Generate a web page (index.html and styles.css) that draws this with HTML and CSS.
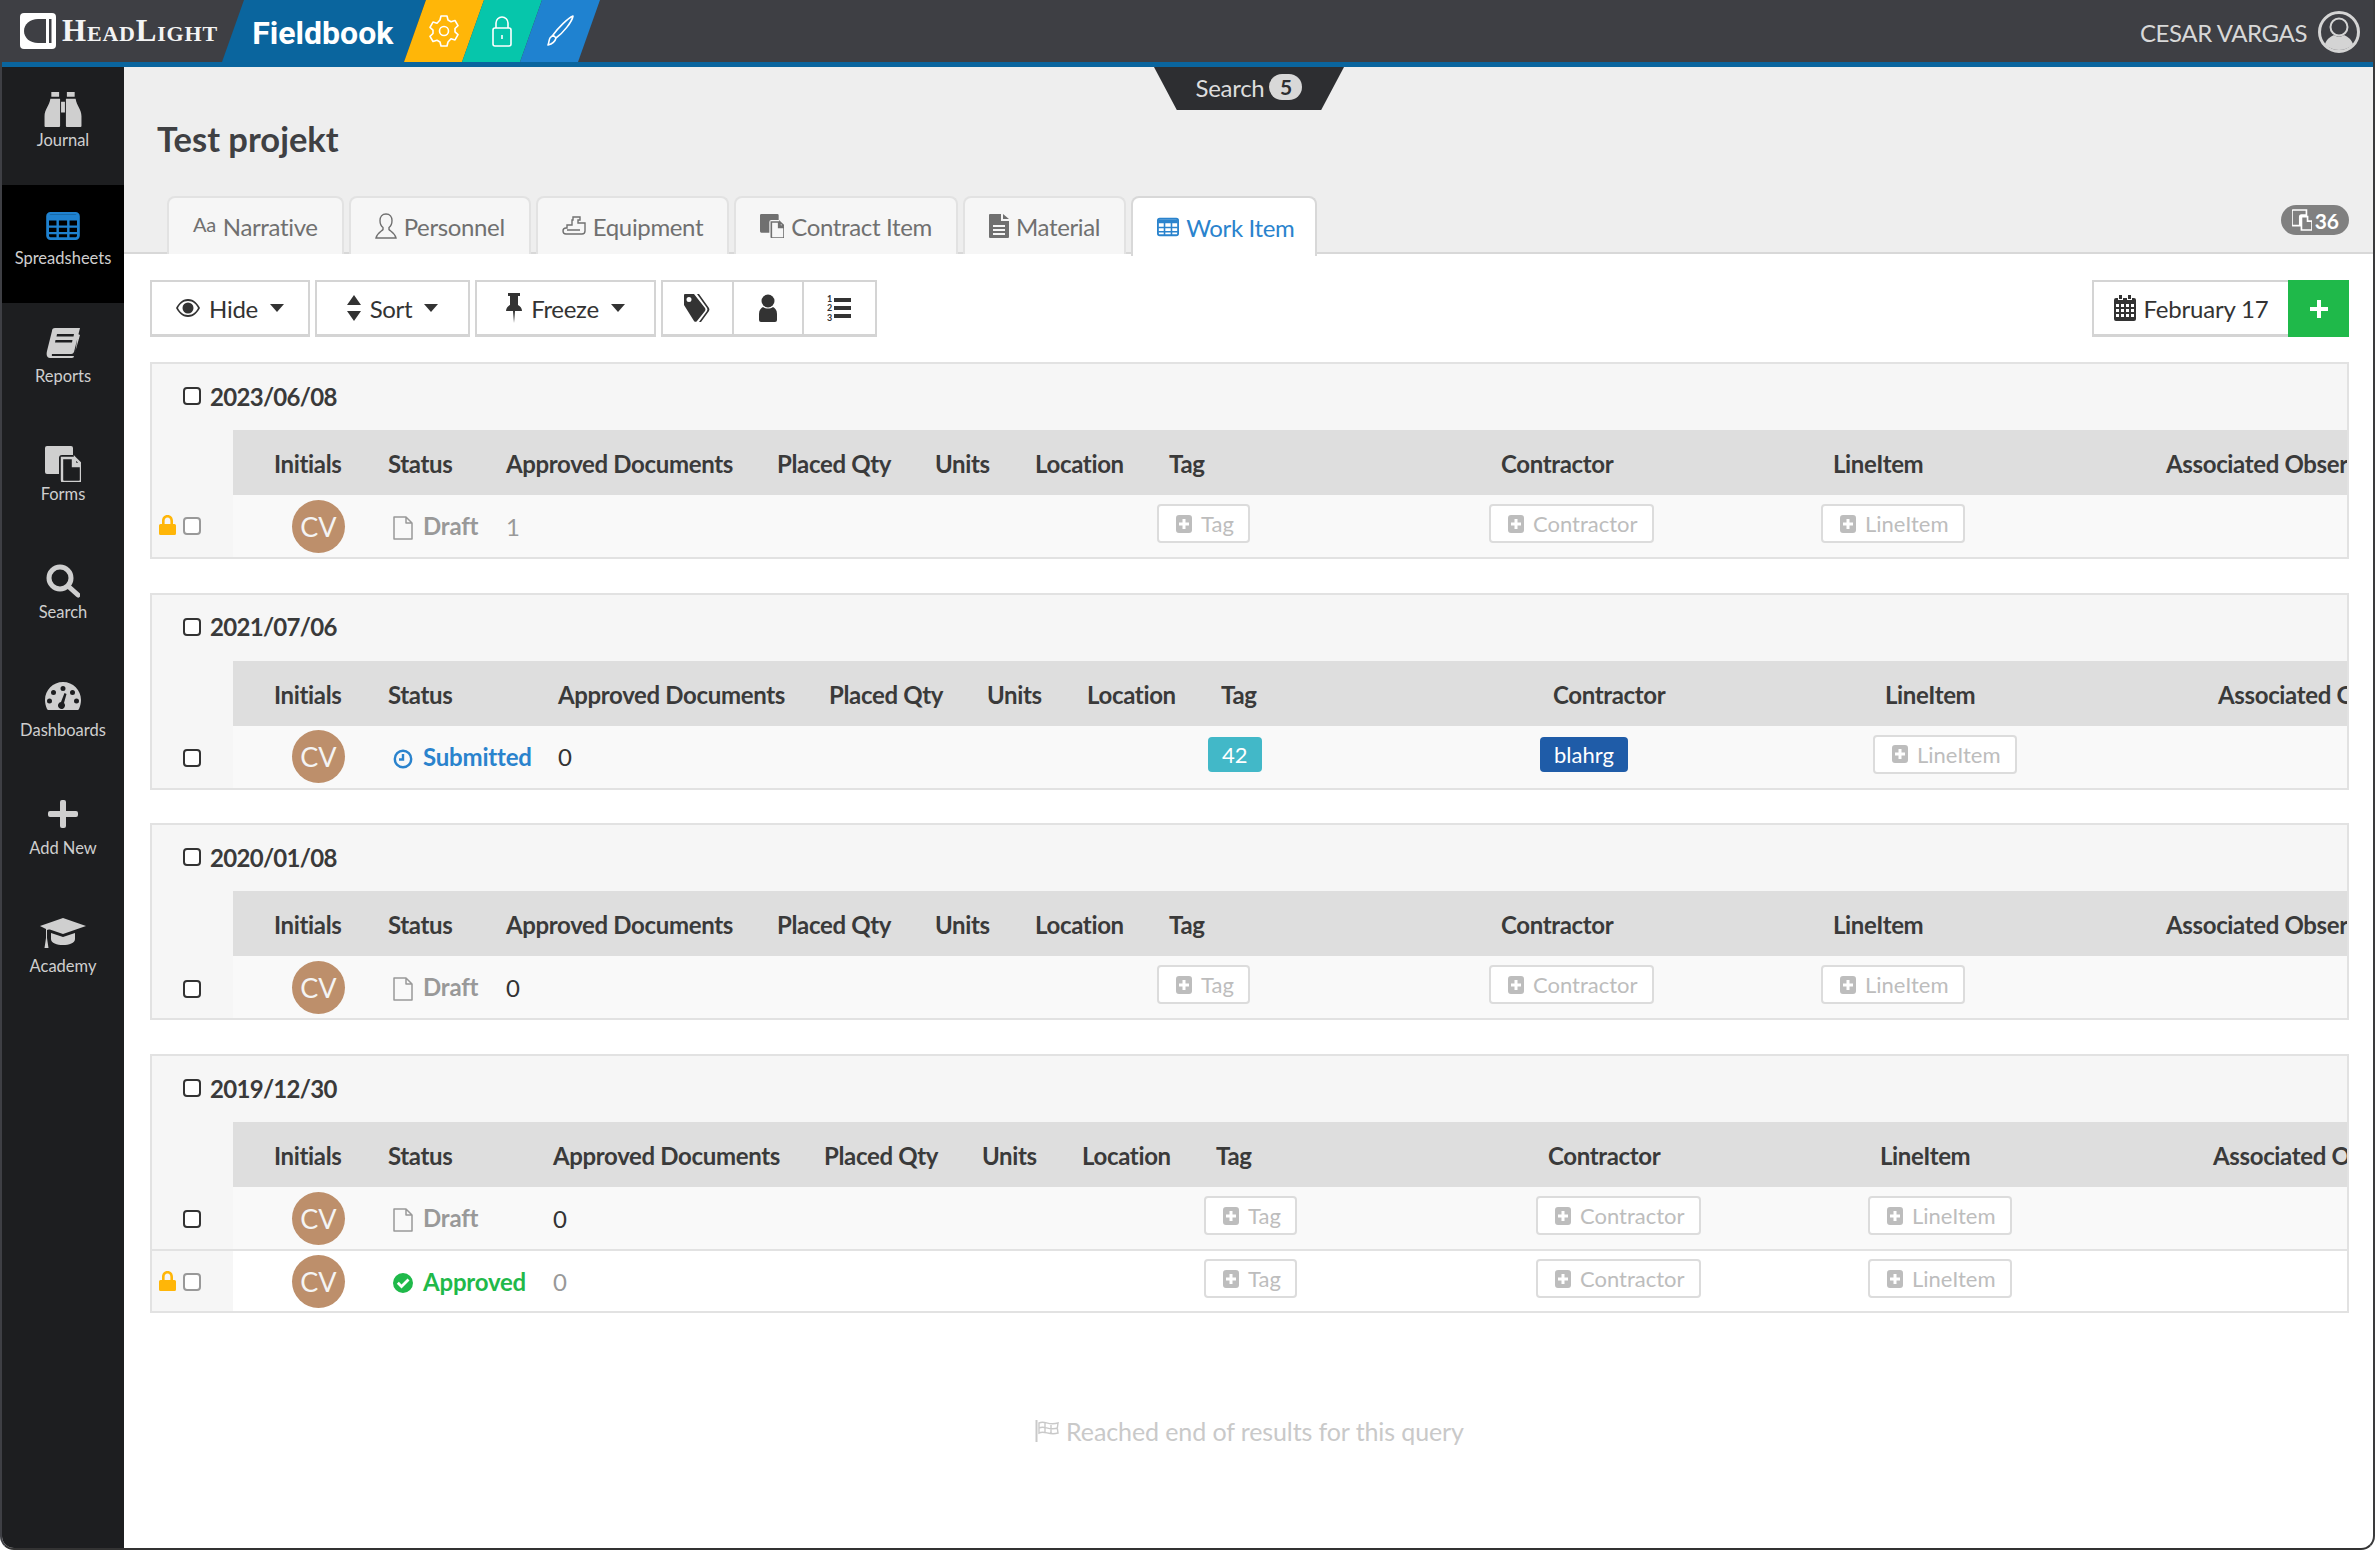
FILE: index.html
```html
<!DOCTYPE html>
<html lang="en">
<head>
    <meta charset="UTF-8">
    <title>Fieldbook - Test projekt</title>
    <link rel="stylesheet" href="styles.css">
</head>
<body>
    <svg class="sprite" width="0" height="0">
        <symbol id="i-grid" viewBox="0 0 36 30">
            <rect x="1.5" y="1.5" width="33" height="27" rx="3" fill="none" stroke="currentColor" stroke-width="3"/>
            <path d="M2 3h32v6H2zM2 14.5h32v2.4H2zM2 21.5h32v2.4H2zM11 8h2.6v20H11zM22.4 8H25v20h-2.6z" fill="currentColor"/>
        </symbol>
        <symbol id="i-forms" viewBox="0 0 36 36">
            <path d="M2 0h24a2 2 0 0 1 2 2v7H17a3 3 0 0 0-3 3v16H2a2 2 0 0 1-2-2V2a2 2 0 0 1 2-2z" fill="currentColor"/>
            <path d="M17 12h11v8h8v14a2 2 0 0 1-2 2H19a2 2 0 0 1-2-2zM30 12l6 6h-6z" fill="none" stroke="currentColor" stroke-width="2.4"/>
        </symbol>
        <symbol id="i-plus-square" viewBox="0 0 16 18">
            <path fill-rule="evenodd" d="M3 0h10a3 3 0 0 1 3 3v12a3 3 0 0 1-3 3H3a3 3 0 0 1-3-3V3a3 3 0 0 1 3-3zM6.5 4v3.5H3v3h3.500V14h3v-3.500H13v-3H9.500V4z" fill="currentColor"/>
        </symbol>
        <symbol id="i-file" viewBox="0 0 20 24">
            <path d="M1 1h12l6 6v16H1zM13 1v6h6" fill="none" stroke="currentColor" stroke-width="1.5" stroke-linejoin="round"/>
        </symbol>
        <symbol id="i-lock" viewBox="0 0 17 20">
            <path fill-rule="evenodd" d="M8.5 0C5 0 3 2.6 3 6v3H1.5A1.5 1.5 0 0 0 0 10.5v8A1.5 1.5 0 0 0 1.5 20h14a1.5 1.5 0 0 0 1.5-1.500v-8A1.5 1.5 0 0 0 15.500 9H14V6c0-3.400-2-6-5.500-6zM5.600 9V6c0-2 1-3.400 2.900-3.400S11.400 4 11.400 6v3z" fill="currentColor"/>
        </symbol>
        <symbol id="i-caret" viewBox="0 0 14 8">
            <path d="M0 0h14L7 8z" fill="currentColor"/>
        </symbol>
    </svg>

    <div class="window">
        <header class="topbar">
            <div class="brand">
                <span class="brand-mark">
                    <svg width="36" height="36" viewBox="0 0 36 36"><rect width="36" height="36" rx="4" fill="#fff"/><path d="M26 6H18C10 6 4 11 4 18s6 12 14 12h8z" fill="#3e3f44"/><path d="M29 6h2.5v24H29z" fill="#3e3f44"/></svg>
                </span>
                <span class="brand-name">HeadLight</span>
            </div>
            <div class="band band-app"><span>Fieldbook</span></div>
            <div class="band band-orange"><span>
                <svg width="30" height="34" viewBox="0 0 30 34" fill="none" stroke="#fff" stroke-width="1.6" stroke-linejoin="round"><path d="M12 2h6l1 4 3 1.700 4-1.200 3 5.200-3 2.800v3.400l3 2.800-3 5.200-4-1.200L19 28l-1 4h-6l-1-4-3-1.700-4 1.200-3-5.200 3-2.800v-3.400l-3-2.800 3-5.200 4 1.200L11 6z"/><circle cx="15" cy="17" r="4.5"/></svg>
            </span></div>
            <div class="band band-teal"><span>
                <svg width="22" height="32" viewBox="0 0 22 32" fill="none" stroke="#fff" stroke-width="1.6"><rect x="2" y="13" width="18" height="18" rx="2"/><path d="M5 13V8a6 6 0 0 1 12 0v5M11 20v4"/></svg>
            </span></div>
            <div class="band band-blue"><span>
                <svg width="30" height="32" viewBox="0 0 30 32" fill="none" stroke="#fff" stroke-width="1.6" stroke-linejoin="round"><path d="M28 1c-1 6-10 17-17 22l-3-3C13 13 23 3 28 1zM8 20l3 3c-1 4-4 6-8 7 1-3 1-5 2-7z"/></svg>
            </span></div>
            <div class="user">
                <span>CESAR VARGAS</span>
                <svg width="42" height="42" viewBox="0 0 42 42"><circle cx="21" cy="21" r="19.5" fill="#3e3f44" stroke="#d4d4d4" stroke-width="3"/><circle cx="21" cy="16" r="8.5" fill="none" stroke="#d4d4d4" stroke-width="2"/><path d="M7 33c2-6 7-8 9-9 3 2 7 2 10 0 2 1 7 3 9 9-7 8-21 8-28 0z" fill="#d4d4d4"/></svg>
            </div>
        </header>

        <div class="layout">
            <nav class="sidebar">
                <a class="side-item">
                    <svg width="38" height="35" viewBox="0 0 38 36"><path d="M7 0h8v5H7zM23 0h8v5h-8zM6 7h10v28a1 1 0 0 1-1 1H1a1 1 0 0 1-1-1v-10C0 18 5 14 6 7zM32 7H22v28a1 1 0 0 0 1 1h14a1 1 0 0 0 1-1v-10C38 18 33 14 32 7zM17 10h4v11h-4z" fill="currentColor"/></svg>
                    <span>Journal</span>
                </a>
                <a class="side-item active">
                    <svg width="34" height="28"><use href="#i-grid"/></svg>
                    <span>Spreadsheets</span>
                </a>
                <a class="side-item">
                    <svg width="34" height="30" viewBox="0 0 34 30"><path d="M9 0h25l-6 24a3 3 0 0 1-3 2H6a2.500 2.500 0 0 0 0 2h22l1.500-5L32 6l2 1-6 21a2 2 0 0 1-2 2H4c-3 0-4-3-3-7L6 3a3 3 0 0 1 3-3z" fill="currentColor"/><path d="M11 6h17l-.5 2.500h-17zM9.500 12h17L26 14.500H9z" fill="#1d1e20"/></svg>
                    <span>Reports</span>
                </a>
                <a class="side-item">
                    <svg width="36" height="36"><use href="#i-forms"/></svg>
                    <span>Forms</span>
                </a>
                <a class="side-item">
                    <svg width="34" height="34" viewBox="0 0 34 34" fill="none" stroke="currentColor"><circle cx="14" cy="14" r="11" stroke-width="5"/><path d="M22 22l10 9" stroke-width="5" stroke-linecap="round"/></svg>
                    <span>Search</span>
                </a>
                <a class="side-item">
                    <svg width="36" height="28" viewBox="0 0 36 28"><path fill-rule="evenodd" d="M18 0C8 0 0 8 0 18c0 3 .7 6 2 9a2 2 0 0 0 2 1h28a2 2 0 0 0 2-1c1.300-3 2-6 2-9C36 8 28 0 18 0zM18 4a2.500 2.500 0 1 1 0 5 2.500 2.500 0 0 1 0-5zM8.500 8a2.500 2.500 0 1 1 0 5 2.500 2.500 0 0 1 0-5zM27.500 8a2.500 2.500 0 1 1 0 5 2.500 2.500 0 0 1 0-5zM4.500 16.500a2.500 2.500 0 1 1 0 5 2.500 2.500 0 0 1 0-5zM31.500 16.500a2.500 2.500 0 1 1 0 5 2.500 2.500 0 0 1 0-5zM19.500 11l2 1-2.500 9a3.500 3.500 0 1 1-3-1z" fill="currentColor"/></svg>
                    <span>Dashboards</span>
                </a>
                <a class="side-item">
                    <svg width="30" height="28" viewBox="0 0 30 28"><path d="M12 2a2 2 0 0 1 2-2h2a2 2 0 0 1 2 2v9h10a2 2 0 0 1 2 2v2a2 2 0 0 1-2 2H18v9a2 2 0 0 1-2 2h-2a2 2 0 0 1-2-2v-9H2a2 2 0 0 1-2-2v-2a2 2 0 0 1 2-2h10z" fill="currentColor"/></svg>
                    <span>Add New</span>
                </a>
                <a class="side-item">
                    <svg width="46" height="30" viewBox="0 0 46 30"><path d="M23 0l23 8-23 8L7 10.500l16-3-16 4.500V20l1.500 10h-4L6 20v-9L0 8zM11 15l12 4 12-4v6c0 4-6 6-12 6s-12-2-12-6z" fill="currentColor"/></svg>
                    <span>Academy</span>
                </a>
            </nav>

            <main class="content">
                <div class="search-tab">Search <b>5</b></div>

                <section class="page-head">
                    <h1>Test projekt</h1>
                    <div class="tabs">
                        <a class="tab"><span class="tab-aa">Aa</span> Narrative</a>
                        <a class="tab">
                            <svg width="22" height="26" viewBox="0 0 22 26" fill="none" stroke="currentColor" stroke-width="1.4"><path d="M11 1c-4 0-6 3-6 6.500 0 3 1 5.500 3 7v2C7 18 2 20 1 25h20c-1-5-6-7-7-8.500v-2c2-1.500 3-4 3-7C17 4 15 1 11 1z"/></svg>
                            Personnel
                        </a>
                        <a class="tab">
                            <svg width="24" height="20" viewBox="0 0 24 20" fill="none" stroke="currentColor" stroke-width="1.4"><path d="M11 1h7v3h-2v3h7v8a3 3 0 0 1-3 3H4a3 3 0 0 1 0-6h1V9h5V4h1zM5 14h13"/></svg>
                            Equipment
                        </a>
                        <a class="tab">
                            <svg width="24" height="24"><use href="#i-forms"/></svg>
                            Contract Item
                        </a>
                        <a class="tab">
                            <svg width="20" height="24" viewBox="0 0 20 24"><path fill-rule="evenodd" d="M1 0h11v7h8v16a1 1 0 0 1-1 1H1a1 1 0 0 1-1-1V1a1 1 0 0 1 1-1zM14 0l6 5h-6zM4 11v2h12v-2zM4 15v2h12v-2zM4 19v2h12v-2z" fill="currentColor"/></svg>
                            Material
                        </a>
                        <a class="tab active">
                            <svg width="22" height="20"><use href="#i-grid"/></svg>
                            Work Item
                        </a>
                        <span class="count-badge">
                            <svg width="20" height="22" viewBox="0 0 36 36"><path d="M2 0h24v9H17a3 3 0 0 0-3 3v16H2a2 2 0 0 1-2-2V2a2 2 0 0 1 2-2zM17 12h11v8h8v16H17z" fill="none" stroke="#fff" stroke-width="3"/></svg>
                            36
                        </span>
                    </div>
                </section>

                <section class="body">
                    <div class="toolbar">
                        <button class="tool tool-hide">
                            <svg width="24" height="20" viewBox="0 0 24 20"><path fill-rule="evenodd" d="M12 1C6 1 2 6 0 10c2 4 6 9 12 9s10-5 12-9c-2-4-6-9-12-9zM12 3c5 0 8.500 3.500 10 7-1.500 3.500-5 7-10 7S3.500 13.500 2 10c1.500-3.500 5-7 10-7zM12 4.500a5.500 5.500 0 1 0 0 11 5.500 5.500 0 0 0 0-11z" fill="currentColor"/></svg>
                            Hide <svg class="caret" width="14" height="8"><use href="#i-caret"/></svg>
                        </button>
                        <button class="tool tool-sort">
                            <svg width="14" height="26" viewBox="0 0 14 26"><path d="M7 0l7 10H0zM7 26L0 16h14z" fill="currentColor"/></svg>
                            Sort <svg class="caret" width="14" height="8"><use href="#i-caret"/></svg>
                        </button>
                        <button class="tool tool-freeze">
                            <svg width="16" height="30" viewBox="0 0 16 30"><path d="M2 0h12v3h-2v9c2 1 4 3 4 6H9l-1 12-1-12H0c0-3 2-5 4-6V3H2z" fill="currentColor"/></svg>
                            Freeze <svg class="caret" width="14" height="8"><use href="#i-caret"/></svg>
                        </button>
                        <div class="tool-group">
                            <button class="tool-icon">
                                <svg width="26" height="28" viewBox="0 0 26 28"><path fill-rule="evenodd" d="M1 0h9l11 14a3 3 0 0 1 0 3l-8 10a2 2 0 0 1-3 0L0 11V1a1 1 0 0 1 1-1zM5 3a2.500 2.500 0 1 0 0 5 2.500 2.500 0 0 0 0-5z" fill="currentColor"/><path d="M13 0h2l10 14a3 3 0 0 1 0 3l-8 11h-2l8-11a3 3 0 0 0 0-3z" fill="currentColor"/></svg>
                            </button>
                            <button class="tool-icon">
                                <svg width="18" height="28" viewBox="0 0 18 28"><circle cx="9" cy="7" r="6.5" fill="currentColor"/><path d="M4 13c3 2 7 2 10 0 2 1 4 3 4 7v6a2 2 0 0 1-2 2H2a2 2 0 0 1-2-2v-6c0-4 2-6 4-7z" fill="currentColor"/></svg>
                            </button>
                            <button class="tool-icon">
                                <svg width="24" height="28" viewBox="0 0 24 28"><path d="M7 4h17v4H7zM7 12h17v4H7zM7 20h17v4H7z" fill="currentColor"/><text x="0" y="8" class="list-num">1</text><text x="0" y="17" class="list-num">2</text><text x="0" y="27" class="list-num">3</text></svg>
                            </button>
                        </div>
                        <div class="date-picker">
                            <button class="date-btn">
                                <svg width="22" height="26" viewBox="0 0 22 26"><path fill-rule="evenodd" d="M5 0h3v4H5zM14 0h3v4h-3zM2 3h2v2h5V3h4v2h5V3h2a2 2 0 0 1 2 2v19a2 2 0 0 1-2 2H2a2 2 0 0 1-2-2V5a2 2 0 0 1 2-2zM2 9v3h3V9zM7 9v3h3V9zM12 9v3h3V9zM17 9v3h3V9zM2 14v3h3v-3zM7 14v3h3v-3zM12 14v3h3v-3zM17 14v3h3v-3zM2 19v3h3v-3zM7 19v3h3v-3zM12 19v3h3v-3zM17 19v3h3v-3z" fill="currentColor"/></svg>
                                February 17
                            </button>
                            <button class="add-btn">
                                <svg width="18" height="18" viewBox="0 0 18 18"><path d="M7 0h4v7h7v4h-7v7H7v-7H0V7h7z" fill="#fff"/></svg>
                            </button>
                        </div>
                    </div>

                    <div class="group">
                        <div class="group-date"><span class="check"></span>2023/06/08</div>
                        <table class="sheet status-narrow">
                            <colgroup><col class="c-gutter"><col class="c-initials"><col class="c-status"><col class="c-docs"><col class="c-qty"><col class="c-units"><col class="c-location"><col class="c-tag"><col class="c-contractor"><col class="c-line"><col class="c-assoc"></colgroup>
                            <thead><tr><td class="gutter"></td><th class="pad-initials">Initials</th><th>Status</th><th>Approved Documents</th><th>Placed Qty</th><th>Units</th><th>Location</th><th>Tag</th><th>Contractor</th><th>LineItem</th><th>Associated Observations</th></tr></thead>
                            <tbody>
                                <tr>
                                    <td class="gutter"><svg class="lock" width="17" height="20"><use href="#i-lock"/></svg><span class="check muted"></span></td>
                                    <td><span class="avatar">CV</span></td>
                                    <td class="state draft"><svg width="20" height="24"><use href="#i-file"/></svg>Draft</td>
                                    <td class="num muted-num">1</td><td></td><td></td><td></td>
                                    <td><a class="add"><svg width="16" height="18"><use href="#i-plus-square"/></svg>Tag</a></td>
                                    <td><a class="add"><svg width="16" height="18"><use href="#i-plus-square"/></svg>Contractor</a></td>
                                    <td><a class="add"><svg width="16" height="18"><use href="#i-plus-square"/></svg>LineItem</a></td>
                                    <td></td>
                                </tr>
                            </tbody>
                        </table>
                    </div>

                    <div class="group">
                        <div class="group-date"><span class="check"></span>2021/07/06</div>
                        <table class="sheet status-wide">
                            <colgroup><col class="c-gutter"><col class="c-initials"><col class="c-status"><col class="c-docs"><col class="c-qty"><col class="c-units"><col class="c-location"><col class="c-tag"><col class="c-contractor"><col class="c-line"><col class="c-assoc"></colgroup>
                            <thead><tr><td class="gutter"></td><th class="pad-initials">Initials</th><th>Status</th><th>Approved Documents</th><th>Placed Qty</th><th>Units</th><th>Location</th><th>Tag</th><th>Contractor</th><th>LineItem</th><th>Associated Observations</th></tr></thead>
                            <tbody>
                                <tr>
                                    <td class="gutter"><span class="check no-lock"></span></td>
                                    <td><span class="avatar">CV</span></td>
                                    <td class="state submitted">
                                        <svg width="20" height="20" viewBox="0 0 20 20" fill="none" stroke="currentColor" stroke-width="2.4"><circle cx="10" cy="10" r="8.2"/><path d="M10 5v5.500H6"/></svg>Submitted
                                    </td>
                                    <td class="num">0</td><td></td><td></td><td></td>
                                    <td><span class="chip chip-tag">42</span></td>
                                    <td><span class="chip chip-contractor">blahrg</span></td>
                                    <td><a class="add"><svg width="16" height="18"><use href="#i-plus-square"/></svg>LineItem</a></td>
                                    <td></td>
                                </tr>
                            </tbody>
                        </table>
                    </div>

                    <div class="group">
                        <div class="group-date"><span class="check"></span>2020/01/08</div>
                        <table class="sheet status-narrow">
                            <colgroup><col class="c-gutter"><col class="c-initials"><col class="c-status"><col class="c-docs"><col class="c-qty"><col class="c-units"><col class="c-location"><col class="c-tag"><col class="c-contractor"><col class="c-line"><col class="c-assoc"></colgroup>
                            <thead><tr><td class="gutter"></td><th class="pad-initials">Initials</th><th>Status</th><th>Approved Documents</th><th>Placed Qty</th><th>Units</th><th>Location</th><th>Tag</th><th>Contractor</th><th>LineItem</th><th>Associated Observations</th></tr></thead>
                            <tbody>
                                <tr>
                                    <td class="gutter"><span class="check no-lock"></span></td>
                                    <td><span class="avatar">CV</span></td>
                                    <td class="state draft"><svg width="20" height="24"><use href="#i-file"/></svg>Draft</td>
                                    <td class="num">0</td><td></td><td></td><td></td>
                                    <td><a class="add"><svg width="16" height="18"><use href="#i-plus-square"/></svg>Tag</a></td>
                                    <td><a class="add"><svg width="16" height="18"><use href="#i-plus-square"/></svg>Contractor</a></td>
                                    <td><a class="add"><svg width="16" height="18"><use href="#i-plus-square"/></svg>LineItem</a></td>
                                    <td></td>
                                </tr>
                            </tbody>
                        </table>
                    </div>

                    <div class="group">
                        <div class="group-date"><span class="check"></span>2019/12/30</div>
                        <table class="sheet status-mid">
                            <colgroup><col class="c-gutter"><col class="c-initials"><col class="c-status"><col class="c-docs"><col class="c-qty"><col class="c-units"><col class="c-location"><col class="c-tag"><col class="c-contractor"><col class="c-line"><col class="c-assoc"></colgroup>
                            <thead><tr><td class="gutter"></td><th class="pad-initials">Initials</th><th>Status</th><th>Approved Documents</th><th>Placed Qty</th><th>Units</th><th>Location</th><th>Tag</th><th>Contractor</th><th>LineItem</th><th>Associated Observations</th></tr></thead>
                            <tbody>
                                <tr>
                                    <td class="gutter"><span class="check no-lock"></span></td>
                                    <td><span class="avatar">CV</span></td>
                                    <td class="state draft"><svg width="20" height="24"><use href="#i-file"/></svg>Draft</td>
                                    <td class="num">0</td><td></td><td></td><td></td>
                                    <td><a class="add"><svg width="16" height="18"><use href="#i-plus-square"/></svg>Tag</a></td>
                                    <td><a class="add"><svg width="16" height="18"><use href="#i-plus-square"/></svg>Contractor</a></td>
                                    <td><a class="add"><svg width="16" height="18"><use href="#i-plus-square"/></svg>LineItem</a></td>
                                    <td></td>
                                </tr>
                                <tr class="row-white">
                                    <td class="gutter"><svg class="lock" width="17" height="20"><use href="#i-lock"/></svg><span class="check muted"></span></td>
                                    <td><span class="avatar">CV</span></td>
                                    <td class="state approved">
                                        <svg width="20" height="20" viewBox="0 0 20 20"><path fill-rule="evenodd" d="M10 0a10 10 0 1 1 0 20 10 10 0 0 1 0-20zM14.500 5.500L8.500 11.500 5.800 8.800 3.800 10.800l4.700 4.700 8-8z" fill="currentColor"/></svg>Approved
                                    </td>
                                    <td class="num muted-num">0</td><td></td><td></td><td></td>
                                    <td><a class="add"><svg width="16" height="18"><use href="#i-plus-square"/></svg>Tag</a></td>
                                    <td><a class="add"><svg width="16" height="18"><use href="#i-plus-square"/></svg>Contractor</a></td>
                                    <td><a class="add"><svg width="16" height="18"><use href="#i-plus-square"/></svg>LineItem</a></td>
                                    <td></td>
                                </tr>
                            </tbody>
                        </table>
                    </div>

                    <p class="end-note">
                        <svg width="24" height="24" viewBox="0 0 24 24" fill="none" stroke="currentColor" stroke-width="1.4"><path d="M1.500 1v22" stroke-width="2"/><path d="M4 4c6-3 9 3 19 0-1 4-1 7 0 10-9 3-13-3-19 0zM4 9c6-3 9 3 19 0M10 4v10M16 6v9"/></svg>
                        Reached end of results for this query
                    </p>
                </section>
            </main>
        </div>
    </div>
</body>
</html>
```

FILE: styles.css
```css
* {
    box-sizing: border-box;
}
html, body {
    margin: 0;
    height: 100%;
    overflow: hidden;
}
body {
    font-family: Lato, "Open Sans", sans-serif;
    font-size: 24px;
    color: #333;
    background: #fff;
}
button {
    font: inherit;
    color: inherit;
    background: #fff;
    cursor: pointer;
}
.sprite {
    position: absolute;
}
.window {
    height: 1550px;
    border-left: 2px solid #3e3f44;
    border-right: 2px solid #3a3a3c;
    border-bottom: 2px solid #333;
    border-radius: 0 0 14px 14px;
    overflow: hidden;
}

/* top bar */
.topbar {
    display: flex;
    align-items: stretch;
    height: 67px;
    background: #3e3f44;
    border-bottom: 5px solid #0a659e;
}
.brand {
    display: flex;
    align-items: center;
    gap: 6px;
    width: 231px;
    padding-left: 18px;
}
.brand-mark {
    display: flex;
}
.brand-name {
    font-family: "Liberation Serif", serif;
    font-weight: bold;
    font-variant: small-caps;
    font-size: 31px;
    color: #f4f4f4;
    letter-spacing: .8px;
}
.band {
    transform: skewX(-19.5deg);
    display: flex;
    align-items: center;
    justify-content: center;
    width: 58px;
}
.band span {
    display: flex;
    transform: skewX(19.5deg);
}
.band-app {
    width: 182px;
    padding-top: 3px;
    background: #0a659e;
    font-family: Roboto, sans-serif;
    font-weight: 700;
    font-size: 32px;
    color: #fff;
}
.band-orange {
    background: #ffb608;
}
.band-teal {
    background: #06c6ab;
}
.band-blue {
    background: #1f82d0;
}
.user {
    margin-left: auto;
    display: flex;
    align-items: center;
    gap: 11px;
    padding: 2px 13px 0 0;
    color: #d8d8d8;
    font-size: 24px;
    letter-spacing: -.4px;
}

/* sidebar */
.layout {
    display: flex;
    height: 1481px;
}
.sidebar {
    width: 122px;
    flex: none;
    background: #1d1e20;
}
.side-item {
    display: flex;
    flex-direction: column;
    align-items: center;
    height: 118px;
    padding-top: 25px;
    color: #cfcfcf;
    font-size: 16.5px;
}
.side-item span {
    position: absolute;
    margin-top: 38px;
}
.side-item.active {
    background: #000;
    color: #1f82d0;
    padding-top: 27px;
}
.side-item.active span {
    color: #cfcfcf;
    margin-top: 36px;
}

/* page head */
.content {
    flex: 1;
    min-width: 0;
    position: relative;
}
.search-tab {
    position: absolute;
    top: 0;
    left: 1030px;
    width: 190px;
    height: 43px;
    display: flex;
    align-items: center;
    justify-content: center;
    gap: 5px;
    background: #2d2e31;
    clip-path: polygon(0 0, 100% 0, 88% 100%, 12% 100%);
    color: #ddd;
    font-size: 24px;
    padding: 0 0 3px 0;
    letter-spacing: -.3px;
}
.search-tab b {
    width: 33px;
    height: 26px;
    line-height: 26px;
    text-align: center;
    border-radius: 13px;
    background: #d8d8d8;
    color: #2d2e31;
    font-size: 21px;
}
.page-head {
    height: 187px;
    background: #eee;
    border-bottom: 2px solid #d8d8d8;
    padding-left: 33px;
}
h1 {
    margin: 0;
    padding-top: 52px;
    height: 129px;
    font-size: 34.5px;
    line-height: 40px;
    font-weight: 700;
    color: #3f4043;
}
.tabs {
    display: flex;
    align-items: flex-start;
    padding: 0 24px 0 10px;
    gap: 5px;
}
.tab {
    display: flex;
    align-items: center;
    justify-content: center;
    gap: 7px;
    height: 58px;
    padding: 0 24px;
    background: #f6f6f6;
    border: 2px solid #e2e2e2;
    border-bottom: 0;
    border-radius: 8px 8px 0 0;
    color: #707070;
    font-size: 24px;
    letter-spacing: -.35px;
}
.tab-aa {
    font-size: 20px;
    position: relative;
    top: -2px;
}
.tab.active {
    background: #fff;
    color: #2a83cd;
    border-color: #d8d8d8;
    height: 60px;
    padding-right: 20px;
    position: relative;
}
.count-badge {
    margin: 9px 0 0 auto;
    display: flex;
    align-items: center;
    gap: 3px;
    height: 30px;
    padding: 0 10px 0 11px;
    border-radius: 15px;
    background: #808080;
    color: #fff;
    font-size: 21px;
    font-weight: 700;
}

/* toolbar */
.body {
    padding: 26px 24px 0 26px;
}
.toolbar {
    display: flex;
    height: 57px;
    gap: 5px;
    margin-bottom: 25px;
}
.tool, .tool-group, .date-btn {
    border: 2px solid #d4d4d4;
    border-bottom-width: 3px;
}
.tool {
    display: flex;
    align-items: center;
    justify-content: center;
    gap: 9px;
    padding: 0;
    letter-spacing: -.3px;
}
.tool .caret {
    margin-left: 3px;
}
.tool-hide {
    width: 160px;
}
.tool-sort {
    width: 155px;
}
.tool-freeze {
    width: 181px;
}
.tool-group {
    display: flex;
}
.tool-icon {
    width: 70.5px;
    border: 0;
    border-right: 2px solid #d4d4d4;
    display: flex;
    align-items: center;
    justify-content: center;
    padding: 0;
}
.tool-icon:last-child {
    border-right: 0;
}
.list-num {
    font-size: 9px;
    font-weight: 700;
    fill: currentColor;
}
.date-picker {
    margin-left: auto;
    display: flex;
}
.date-btn {
    width: 196px;
    display: flex;
    align-items: center;
    justify-content: center;
    gap: 8px;
    padding: 0;
    border-right: 0;
    letter-spacing: -.2px;
}
.add-btn {
    width: 61px;
    border: 0;
    padding: 0;
    background: #1fb94a;
    display: flex;
    align-items: center;
    justify-content: center;
}

/* groups */
.group {
    border: 2px solid #e2e2e2;
    overflow: hidden;
    background: #f9f9f9;
    margin-bottom: 33.7px;
}
.group-date {
    display: flex;
    align-items: center;
    gap: 9px;
    height: 66px;
    padding: 0 0 2px 31px;
    background: #f6f6f6;
    font-weight: 700;
    font-size: 24px;
    letter-spacing: -.7px;
    color: #3a3a3a;
}
.check {
    display: inline-block;
    flex: none;
    width: 18px;
    height: 18px;
    border: 2px solid #333;
    border-radius: 4px;
    background: #fff;
}
.check.muted {
    border-color: #999;
}
.check.no-lock {
    margin-left: 24px;
}
.sheet {
    table-layout: fixed;
    border-collapse: separate;
    border-spacing: 0;
    width: 2300px;
}
.c-gutter { width: 81px; }
.c-initials { width: 155px; }
.c-docs { width: 271px; }
.c-qty { width: 158px; }
.c-units { width: 100px; }
.c-location { width: 134px; }
.c-tag { width: 332px; }
.c-contractor { width: 332px; }
.c-line { width: 333px; }
.c-assoc { width: 400px; }
.status-narrow .c-status { width: 118px; }
.status-wide .c-status { width: 170px; }
.status-mid .c-status { width: 165px; }

.sheet th {
    height: 65px;
    background: #dedede;
    padding: 2px 0 0;
    text-align: left;
    font-size: 24px;
    font-weight: 700;
    letter-spacing: -.35px;
    color: #3a3a3a;
    white-space: nowrap;
}
.sheet th.pad-initials {
    padding-left: 41px;
}
.sheet td {
    height: 62px;
    padding: 0;
    vertical-align: middle;
    white-space: nowrap;
}
.sheet thead .gutter {
    background: #f6f6f6;
}
.sheet tbody .gutter {
    background: #f6f6f6;
    padding-left: 7px;
}
.gutter .check {
    vertical-align: middle;
    margin-bottom: 4px;
}
.lock {
    color: #ffb608;
    vertical-align: middle;
    margin: 0 7px 6px 0;
}
.sheet tbody tr + tr td {
    border-top: 2px solid #e2e2e2;
}
.row-white td {
    background: #fff;
}
.sheet tbody .row-white .gutter {
    background: #f6f6f6;
}
.avatar {
    display: flex;
    align-items: center;
    justify-content: center;
    width: 53px;
    height: 53px;
    margin-left: 59px;
    border-radius: 50%;
    background: #bd8f6b;
    color: #f4f4f4;
    font-size: 27px;
}
.state {
    font-weight: 700;
    padding-left: 5px !important;
    letter-spacing: -.2px;
}
.state svg {
    vertical-align: middle;
    margin-right: 10px;
    position: relative;
    top: -1px;
}
.draft {
    color: #999;
}
.submitted {
    color: #2a83cd;
}
.approved {
    color: #1fb94a;
}
.num {
    color: #333;
}
.muted-num {
    color: #999;
}
.add {
    display: inline-flex;
    align-items: center;
    gap: 9px;
    height: 39px;
    padding: 0 14px 0 17px;
    margin: 0 0 5px -12px;
    vertical-align: middle;
    border: 2px solid #dcdcdc;
    border-radius: 4px;
    background: #fff;
    color: #bdbdbd;
    font-size: 22px;
}
.chip {
    display: inline-flex;
    align-items: center;
    height: 35px;
    padding: 0 14px;
    margin: 0 0 4px -13px;
    vertical-align: middle;
    border-radius: 4px;
    color: #fff;
    font-size: 22px;
}
.chip-tag {
    background: #42b8c8;
}
.chip-contractor {
    background: #1f5ca8;
}
.end-note {
    margin: 103px 0 0;
    display: flex;
    align-items: center;
    justify-content: center;
    gap: 7px;
    color: #c9c9c9;
    font-size: 25px;
    letter-spacing: -.1px;
}
```
